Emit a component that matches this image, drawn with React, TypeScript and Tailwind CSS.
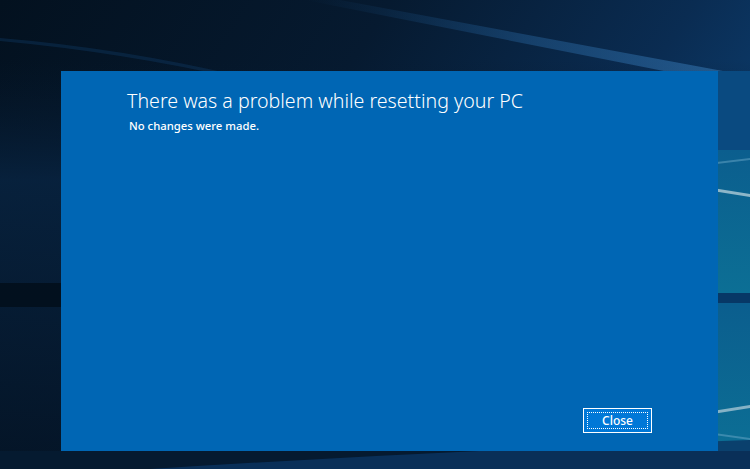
import React from "react";

function Wallpaper() {
  return (
    <svg
      className="absolute inset-0 h-full w-full"
      viewBox="0 0 750 469"
      preserveAspectRatio="none"
    >
      <defs>
        <linearGradient id="sky" x1="0" y1="0" x2="1" y2="0.4">
          <stop offset="0" stopColor="#03111f" />
          <stop offset="0.45" stopColor="#061a30" />
          <stop offset="0.8" stopColor="#0a2c52" />
          <stop offset="1" stopColor="#0c3d6e" />
        </linearGradient>
        <linearGradient id="beam" x1="0" y1="0" x2="1" y2="0">
          <stop offset="0" stopColor="#1a5a96" stopOpacity="0" />
          <stop offset="0.5" stopColor="#2a6aa6" stopOpacity="0.4" />
          <stop offset="1" stopColor="#3b7fbc" stopOpacity="0.55" />
        </linearGradient>
        <linearGradient id="pane" x1="0" y1="0" x2="0" y2="1">
          <stop offset="0" stopColor="#0b5e8e" />
          <stop offset="1" stopColor="#0c6f95" />
        </linearGradient>
        <linearGradient id="leftSide" x1="0" y1="0" x2="0" y2="1">
          <stop offset="0" stopColor="#061a30" stopOpacity="0" />
          <stop offset="0.3" stopColor="#082442" stopOpacity="0.8" />
          <stop offset="1" stopColor="#041426" stopOpacity="0.8" />
        </linearGradient>
      </defs>
      <rect width="750" height="469" fill="url(#sky)" />
      {/* soft glow on the left */}
      <rect x="0" y="60" width="750" height="400" fill="url(#leftSide)" />
      <path d="M0 38 Q120 48 240 76 L240 79 Q120 52 0 41 Z" fill="#12406e" opacity="0.35" />
      {/* diagonal light beam at the top */}
      <path d="M305 0 L340 0 L750 76 L750 88 Z" fill="url(#beam)" />
      {/* right window pane */}
      <rect x="700" y="71" width="50" height="82" fill="#0a4a80" />
      <rect x="700" y="150" width="50" height="143" fill="url(#pane)" />
      <rect x="700" y="293" width="50" height="10" fill="#073866" />
      <rect x="700" y="303" width="50" height="150" fill="url(#pane)" />
      <rect x="700" y="451" width="50" height="18" fill="#0a3f70" />
      <path d="M700 164 L750 158 L750 160 L700 166 Z" fill="#6aa8c8" opacity="0.5" />
      <path d="M700 186 L750 194 L750 197 L700 189 Z" fill="#b9d2dc" opacity="0.75" />
      <path d="M700 413 L750 405 L750 408 L700 416 Z" fill="#b9d2dc" opacity="0.7" />
      <path d="M700 431 L750 438 L750 440 L700 433 Z" fill="#6aa8c8" opacity="0.5" />
      {/* left dark band */}
      <rect x="0" y="283" width="70" height="24" fill="#020b15" opacity="0.7" />
      {/* bottom */}
      <path d="M0 451 L750 451 L750 469 L0 469 Z" fill="#051a30" />
      <path d="M150 469 Q450 450 750 440 L750 469 Z" fill="#0a3563" opacity="0.8" />
    </svg>
  );
}

export default function App() {
  return (
    <div
      className="relative h-[469px] w-[750px] overflow-hidden bg-[#061a30]"
      style={{ fontFamily: '"Noto Sans", "Open Sans", sans-serif' }}
    >
      <Wallpaper />

      {/* Reset dialog */}
      <div className="relative ml-[61px] mt-[71px] flex h-[380px] w-[657px] flex-col bg-[#0066b4] text-white">
        <div className="pl-[66px] pt-[16px]">
          <h1 className="text-[19.6px] font-light leading-[27px]">
            There was a problem while resetting your PC
          </h1>
          <p className="mt-[5px] pl-[2px] text-[11.3px] font-medium leading-[14px]">
            No changes were made.
          </p>
        </div>

        <div className="mt-auto flex justify-end pb-[18px] pr-[66px]">
          <button className="flex h-[25px] w-[69px] items-center justify-center border border-white bg-[#0078d7] p-[3px]">
            <span className="flex h-full w-full items-center justify-center border border-dotted border-white text-[12px] font-medium leading-none">
              Close
            </span>
          </button>
        </div>
      </div>
    </div>
  );
}
